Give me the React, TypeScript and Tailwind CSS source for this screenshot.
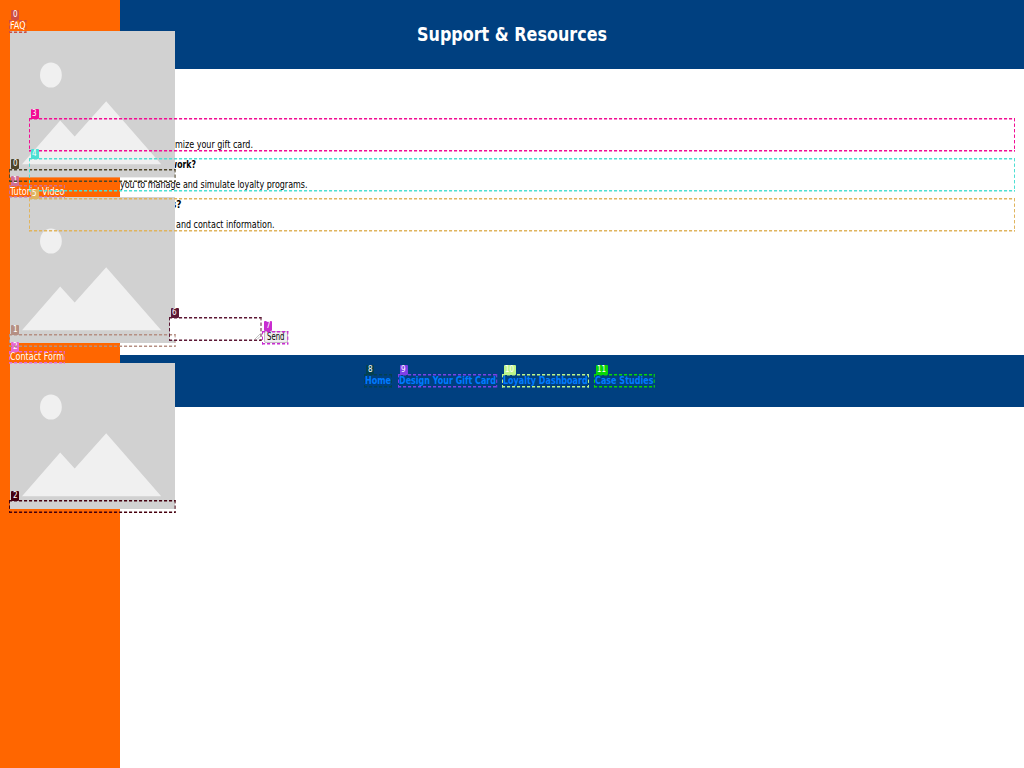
import { useLayoutEffect, useRef, useState, type ReactNode } from "react";

/** One line of text, stretched horizontally to a given width. */
function Fit({ w, className = "", children }: { w: number; className?: string; children: ReactNode }) {
  const ref = useRef<HTMLSpanElement>(null);
  const [scale, setScale] = useState(1);
  useLayoutEffect(() => {
    if (ref.current) setScale(w / ref.current.getBoundingClientRect().width);
  }, []);
  return (
    <span className="inline-block shrink-0" style={{ width: w }}>
      <span
        ref={ref}
        className={`inline-block origin-left whitespace-nowrap ${className}`}
        style={{ transform: `scaleX(${scale})` }}
      >
        {children}
      </span>
    </span>
  );
}

function Placeholder() {
  return (
    <svg width="165" height="146.4" viewBox="0 0 165 146.4" className="block shrink-0">
      <rect width="165" height="146.4" fill="#d1d1d1" />
      <ellipse cx="40.9" cy="44" rx="10.9" ry="12.6" fill="#f0f0f0" />
      <path d="M12 133.2 L50.2 89.5 L64.7 105.6 L96.2 70.3 L151.2 133.2 Z" fill="#f0f0f0" />
    </svg>
  );
}

type Mark = {
  n: string;
  c: string;
  x: number;
  y: number;
  w: number;
  h: number;
  bw?: number;
};

const marks: Mark[] = [
  { n: "0", c: "#cf4d42", x: 9.3, y: 19.6, w: 17.4, h: 13 },
  { n: "1", c: "#cf6f98", x: 9.3, y: 185.4, w: 56, h: 12.5 },
  { n: "2", c: "#e667d2", x: 9.3, y: 351.2, w: 55.7, h: 12.5 },
  { n: "0", c: "#4f462b", x: 9.3, y: 168.6, w: 166.6, h: 12.9 },
  { n: "1", c: "#b58f83", x: 9.3, y: 334.3, w: 166.6, h: 12.9 },
  { n: "2", c: "#45000f", x: 9.3, y: 500, w: 166.6, h: 12.9 },
  { n: "3", c: "#f20d94", x: 29, y: 118.2, w: 986, h: 33.4 },
  { n: "4", c: "#4ddfd3", x: 29, y: 158.2, w: 986, h: 33.4 },
  { n: "5", c: "#e0b45e", x: 29, y: 198.2, w: 986, h: 33.4 },
  { n: "6", c: "#5c1835", x: 169, y: 317.3, w: 92.5, h: 24 },
  { n: "7", c: "#c82cd0", x: 262.2, y: 330.6, w: 26.3, h: 13.5 },
  { n: "8", c: "#034150", x: 364.3, y: 374, w: 28, h: 13.5 },
  { n: "9", c: "#7d40e8", x: 398, y: 374, w: 99.2, h: 13.5 },
  { n: "10", c: "#bdf58a", x: 502.3, y: 374, w: 87, h: 13.5, bw: 11.8 },
  { n: "11", c: "#08d508", x: 594.3, y: 374, w: 60.7, h: 13.5, bw: 11.8 },
];

function Annotation({ m }: { m: Mark }) {
  const bw = m.bw ?? 8;
  return (
    <>
      <svg
        className="absolute overflow-visible"
        style={{ left: m.x, top: m.y }}
        width={m.w}
        height={m.h}
        fill="none"
        stroke={m.c}
      >
        <path d={`M0 .7 H${m.w} M0 ${m.h - 0.7} H${m.w}`} strokeWidth="1.4" strokeDasharray="3.1 1.9" />
        <path d={`M.5 0 V${m.h} M${m.w - 0.5} 0 V${m.h}`} strokeWidth="1" strokeDasharray="3.4 2.1" />
      </svg>
      <span
        className="absolute flex h-[10.2px] items-center justify-center rounded-[1px] font-['DejaVu_Sans',sans-serif] text-[8px] leading-none text-white"
        style={{ left: m.x + 1.7, top: m.y - 9.4, width: bw, backgroundColor: m.c }}
      >
        <Fit w={m.bw ? 9 : 4.6}>{m.n}</Fit>
      </span>
    </>
  );
}

function SideItem({ label, w }: { label: string; w: number }) {
  return (
    <div className="flex h-[165.7px] flex-col">
      <div className="h-[11.4px] text-[11px] leading-[12px] text-white">
        <Fit w={w}>{label}</Fit>
      </div>
      <Placeholder />
    </div>
  );
}

export default function App() {
  return (
    <div className="relative flex h-[768px] w-[1024px] overflow-hidden bg-white font-['DejaVu_Sans_Condensed','DejaVu_Sans',sans-serif] text-black">
      <aside className="relative z-10 h-full w-[120px] shrink-0 bg-[#ff6600] pt-[19.9px] pl-[10px]">
        <SideItem label="FAQ" w={15.6} />
        <SideItem label="Tutorial Video" w={54.5} />
        <SideItem label="Contact Form" w={54} />
      </aside>

      <div className="-ml-[120px] flex w-[1024px] shrink-0 flex-col">
        <header className="flex h-[69px] items-center justify-center bg-[#004080] text-[18.8px] leading-[28px] font-bold text-white">
          <Fit w={190}>Support &amp; Resources</Fit>
        </header>

        <main className="flex h-[286px] flex-col pt-[46px] text-[11px] leading-[20px]">
          <p className="h-5" />
          <p className="h-5 pl-[174.5px]">
            <Fit w={78}>mize your gift card.</Fit>
          </p>
          <h2 className="h-5 pl-[169.5px] font-bold">
            <Fit w={26}>work?</Fit>
          </h2>
          <p className="h-5 pl-[119.5px]">
            <Fit w={187.5}>you to manage and simulate loyalty programs.</Fit>
          </p>
          <h2 className="h-5 pl-[170.5px] font-bold">
            <Fit w={10.5}>s?</Fit>
          </h2>
          <p className="h-5 pl-[176px]">
            <Fit w={98.5}>and contact information.</Fit>
          </p>
          <div className="mt-[82px] flex pl-[169px]">
            <div className="relative z-20 flex h-[24px] w-[92.5px] items-end justify-end p-[2px]">
              <div className="absolute inset-[1px] bg-white" />
              <svg width="5" height="5" stroke="#999" strokeWidth=".6" className="relative">
                <path d="M0 5 L5 0 M2.5 5 L5 2.5" />
              </svg>
            </div>
            <button className="mt-[14px] ml-[2px] flex h-[12px] w-[24px] items-center justify-center rounded-[2px] border border-[#c5b8c5] bg-[#efefef] text-[10px] leading-none">
              <Fit w={17.5}>Send</Fit>
            </button>
          </div>
        </main>

        <footer className="flex h-[52px] bg-[#004080] pt-[19px] pl-[365.3px] text-[11px] leading-[14px] font-bold text-[#007bff]">
          <nav className="flex gap-[7.3px]">
            <Fit w={26}>Home</Fit>
            <Fit w={97}>Design Your Gift Card</Fit>
            <Fit w={84.7}>Loyalty Dashboard</Fit>
            <Fit w={58.5}>Case Studies</Fit>
          </nav>
        </footer>
      </div>

      <div className="pointer-events-none absolute inset-0 z-30">
        {marks.map((m, i) => (
          <Annotation key={i} m={m} />
        ))}
      </div>
    </div>
  );
}
